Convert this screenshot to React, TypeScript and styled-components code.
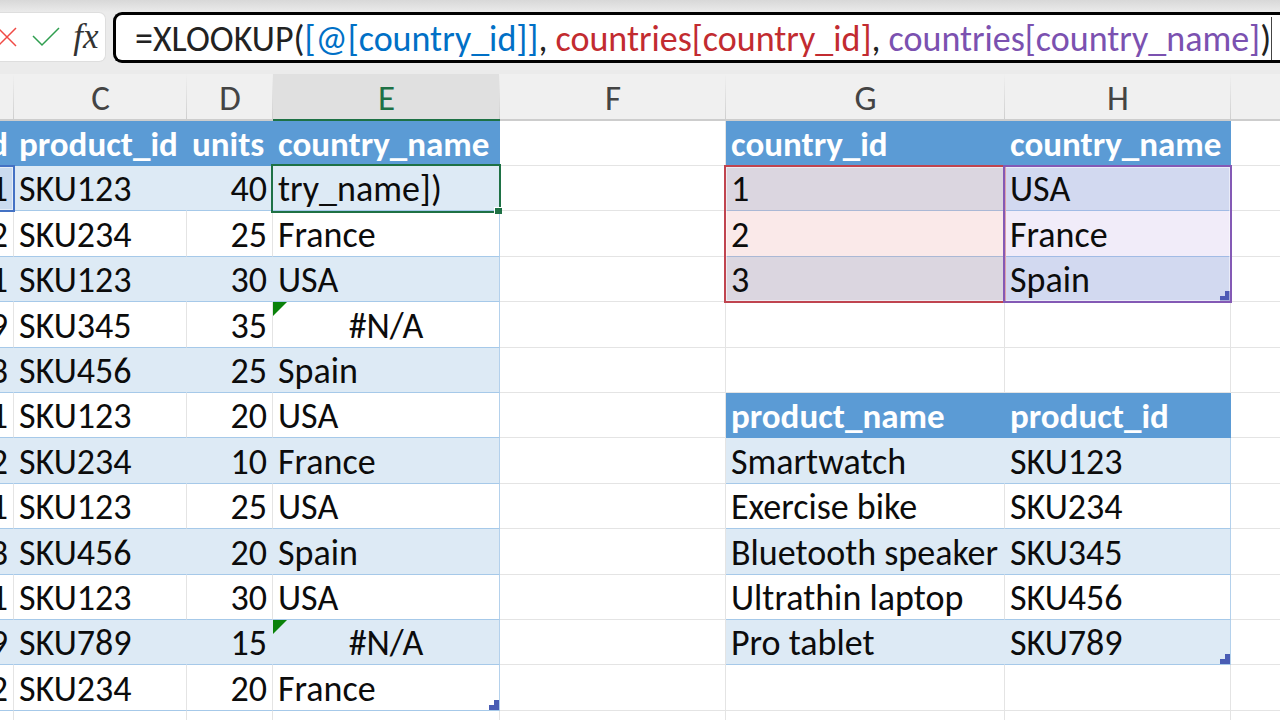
import React from "react";
import styled, { createGlobalStyle, css } from "styled-components";

const GlobalStyle = createGlobalStyle`
  * { box-sizing: border-box; }
  body {
    margin: 0;
    background: #fff;
    color: #0c0c0c;
    font-family: Carlito, Lato, "Liberation Sans", sans-serif;
  }
`;

const Workbook = styled.main`
  height: 100vh;
  overflow: hidden;
`;

const FormulaBar = styled.header`
  display: flex;
  gap: 7px;
  height: 74px;
  padding: 12px 0;
  background: linear-gradient(#d8d8d8, #e9e9e9 11px, #ebebeb 12px);
`;

const EditActions = styled.div`
  display: flex;
  flex: none;
  align-items: center;
  justify-content: flex-end;
  gap: 12px;
  width: 106px;
  height: 50px;
  padding-right: 5px;
  overflow: hidden;
  border: 1px solid #dedede;
  border-left: 0;
  border-radius: 0 7px 7px 0;
  background: #fff;
`;

const ActionButton = styled.button`
  display: flex;
  flex: none;
  align-items: center;
  justify-content: center;
  width: 28px;
  height: 40px;
  padding: 0;
  border: 0;
  background: none;
  color: #333;
  font: italic 35px/40px "Liberation Serif", serif;
`;

const FormulaInput = styled.div`
  display: flex;
  flex: 1;
  align-items: center;
  height: 51px;
  padding: 2px 0 0 19px;
  overflow: hidden;
  border: 3px solid #000;
  border-right: 0;
  border-radius: 9px 0 0 9px;
  background: #fff;
  color: #222;
  font-size: 36px;
  line-height: 44px;
  white-space: pre;
  outline: none;
`;

const Ref = styled.span<{ $color: string }>`
  color: ${(p) => p.$color};
`;

const Caret = styled.span`
  width: 1px;
  height: 44px;
  background: #444;
`;

const Grid = styled.table`
  width: 100%;
  table-layout: fixed;
  border-collapse: separate;
  border-spacing: 0;
  font-size: 36px;
  line-height: 40px;
`;

const Column = styled.col<{ $width?: number }>`
  width: ${(p) => (p.$width ? `${p.$width}px` : "auto")};
`;

const ColumnHead = styled.th<{ $active?: boolean }>`
  position: relative;
  height: 47px;
  padding: 2px 0 0;
  border-bottom: 2px solid #cdcdcd;
  background: #f0f0f0;
  color: #444;
  font-size: 35px;
  font-weight: 400;
  text-align: center;

  &::after {
    content: "";
    position: absolute;
    top: 0;
    right: 0;
    bottom: 0;
    width: 1px;
    background: linear-gradient(#f0f0f0, #cfcfcf);
  }

  &:last-child::after {
    display: none;
  }

  ${(p) =>
    p.$active &&
    css`
      border-bottom-color: #1e7145;
      background: #e0e0e0;
      color: #1e7145;
    `}
`;

const Row = styled.tr`
  height: 45px;
  &:nth-child(5n + 3),
  &:nth-child(5n) {
    height: 46px;
  }
`;

type Look = "blank" | "head" | "band" | "plain";

const Cell = styled.td<{ $look: Look; $align?: string; $edge?: boolean; $error?: boolean }>`
  position: relative;
  padding: 2px 5px 0;
  border-right: 1px solid #e4e4e4;
  border-bottom: 1px solid #e4e4e4;
  text-align: ${(p) => p.$align ?? "left"};
  white-space: nowrap;

  &:last-child {
    border-right: 0;
  }

  ${(p) =>
    p.$look === "head" &&
    css`
      border-color: #5b9bd5;
      background: #5b9bd5;
      color: #fff;
      font-size: 35px;
      font-weight: 700;
    `}
  ${(p) =>
    p.$look === "band" &&
    css`
      border-right-color: #ddeaf5;
      border-bottom-color: #a6c9e9;
      background: #ddeaf5;
    `}
  ${(p) => p.$look === "plain" && "border-bottom-color: #a6c9e9;"}
  ${(p) => p.$edge && p.$look !== "head" && "border-right-color: #b4d1ec;"}
  ${(p) =>
    p.$error &&
    css`
      &::before {
        content: "";
        position: absolute;
        top: 0;
        left: 0;
        border-top: 14px solid #0a820a;
        border-right: 14px solid transparent;
      }
    `}
`;

const RangeFrame = styled.span<{ $line: string; $fill: string; $rows: number }>`
  position: absolute;
  z-index: 1;
  top: -1px;
  left: ${(p) => (p.$rows === 1 ? -6 : -2)}px;
  right: -2px;
  height: ${(p) => (p.$rows === 3 ? 138 : 47)}px;
  border: 2px solid ${(p) => p.$line};
  background: ${(p) => p.$fill};
  box-shadow: inset 0 0 0 1px #ffffff80;
`;

const ActiveFrame = styled.span`
  position: absolute;
  z-index: 1;
  top: -2px;
  left: -2px;
  right: -2px;
  height: 49px;
  border: 2px solid #1e7145;

  &::after {
    content: "";
    position: absolute;
    right: -3px;
    bottom: -3px;
    width: 7px;
    height: 6px;
    border-top: 1px solid #fff;
    border-left: 1px solid #fff;
    background: #1e7145;
  }
`;

const TableCorner = styled.span`
  position: absolute;
  right: 0;
  bottom: 0;
  width: 10px;
  height: 10px;
  background: #4a5db4;
  clip-path: polygon(50% 0, 100% 0, 100% 100%, 0 100%, 0 50%, 50% 50%);
`;

const Clipped = styled.span`
  display: flex;
  justify-content: flex-end;
`;

/* Keeps a value readable above the tint of a referenced range. */
const Value = styled.span`
  position: relative;
  z-index: 2;
`;

const columns = [
  { letter: "", width: 14 },
  { letter: "C", width: 173 },
  { letter: "D", width: 86 },
  { letter: "E", width: 227 },
  { letter: "F", width: 226 },
  { letter: "G", width: 279 },
  { letter: "H", width: 226 },
  { letter: "" },
];

const sales = [
  ["d", "product_id", "units", "country_name"],
  ["1", "SKU123", "40", "try_name])"],
  ["2", "SKU234", "25", "France"],
  ["1", "SKU123", "30", "USA"],
  ["9", "SKU345", "35", "#N/A"],
  ["3", "SKU456", "25", "Spain"],
  ["1", "SKU123", "20", "USA"],
  ["2", "SKU234", "10", "France"],
  ["1", "SKU123", "25", "USA"],
  ["3", "SKU456", "20", "Spain"],
  ["1", "SKU123", "30", "USA"],
  ["9", "SKU789", "15", "#N/A"],
  ["2", "SKU234", "20", "France"],
];

const countries = [
  ["country_id", "country_name"],
  ["1", "USA"],
  ["2", "France"],
  ["3", "Spain"],
];

const products = [
  ["product_name", "product_id"],
  ["Smartwatch", "SKU123"],
  ["Exercise bike", "SKU234"],
  ["Bluetooth speaker", "SKU345"],
  ["Ultrathin laptop", "SKU456"],
  ["Pro tablet", "SKU789"],
];

const PRODUCTS_START = 6;

const lookOf = (index: number): Look => (index === 0 ? "head" : index % 2 ? "band" : "plain");

function SalesCells({ index }: { index: number }) {
  const values = sales[index];
  if (!values) {
    return <>{[0, 1, 2, 3].map((c) => <Cell key={c} $look="blank" />)}</>;
  }
  const look = lookOf(index);
  return (
    <>
      {values.map((value, c) => {
        const error = value === "#N/A";
        const numeric = c === 0 || (c === 2 && index > 0);
        return (
          <Cell
            key={c}
            $look={look}
            $edge={c === 3}
            $error={error}
            $align={error ? "center" : numeric ? "right" : "left"}
          >
            {index === 1 && c === 0 && <RangeFrame $line="#4472c4" $fill="#4472c41f" $rows={1} />}
            {c === 0 ? <Clipped><Value>{value}</Value></Clipped> : value}
            {index === 1 && c === 3 && <ActiveFrame />}
            {index === sales.length - 1 && c === 3 && <TableCorner />}
          </Cell>
        );
      })}
    </>
  );
}

function LookupCells({ index }: { index: number }) {
  const inCountries = index < countries.length;
  const source = inCountries ? countries : products;
  const local = inCountries ? index : index - PRODUCTS_START;
  const values = source[local];
  if (!values) {
    return <>{[0, 1].map((c) => <Cell key={c} $look="blank" />)}</>;
  }
  return (
    <>
      {values.map((value, c) => (
        <Cell key={c} $look={lookOf(local)} $edge={c === 1}>
          <Value>{value}</Value>
          {local === source.length - 1 && c === 1 && <TableCorner />}
          {inCountries && local === 1 && (
            <RangeFrame
              $line={c === 0 ? "#c0444f" : "#8459b5"}
              $fill={c === 0 ? "#d02c241a" : "#7848c01a"}
              $rows={3}
            />
          )}
        </Cell>
      ))}
    </>
  );
}

export default function App() {
  return (
    <Workbook>
      <GlobalStyle />
      <FormulaBar>
        <EditActions>
          <ActionButton aria-label="Cancel">
            <svg width="28" height="28" viewBox="0 0 28 28" fill="none" stroke="#f04a45" strokeWidth="1.5">
              <path d="M6 5 24 23M24 5 6 23" />
            </svg>
          </ActionButton>
          <ActionButton aria-label="Enter">
            <svg width="28" height="28" viewBox="0 0 28 28" fill="none" stroke="#2f9e4f" strokeWidth="1.5">
              <path d="M1 13 10 22 27 5" />
            </svg>
          </ActionButton>
          <ActionButton aria-label="Insert function">fx</ActionButton>
        </EditActions>
        <FormulaInput role="textbox" aria-label="Formula" tabIndex={0}>
          <span>
            =XLOOKUP(<Ref $color="#0070c6">[@[country_id]]</Ref>,{" "}
            <Ref $color="#c22b30">countries[country_id]</Ref>,{" "}
            <Ref $color="#7b51b0">countries[country_name]</Ref>)
          </span>
          <Caret />
        </FormulaInput>
      </FormulaBar>
      <Grid>
        <colgroup>
          {columns.map((column, i) => (
            <Column key={i} $width={column.width} />
          ))}
        </colgroup>
        <thead>
          <tr>
            {columns.map((column, i) => (
              <ColumnHead key={i} scope="col" $active={column.letter === "E"}>
                {column.letter}
              </ColumnHead>
            ))}
          </tr>
        </thead>
        <tbody>
          {Array.from({ length: 14 }, (_, index) => (
            <Row key={index}>
              <SalesCells index={index} />
              <Cell $look="blank" />
              <LookupCells index={index} />
              <Cell $look="blank" />
            </Row>
          ))}
        </tbody>
      </Grid>
    </Workbook>
  );
}
